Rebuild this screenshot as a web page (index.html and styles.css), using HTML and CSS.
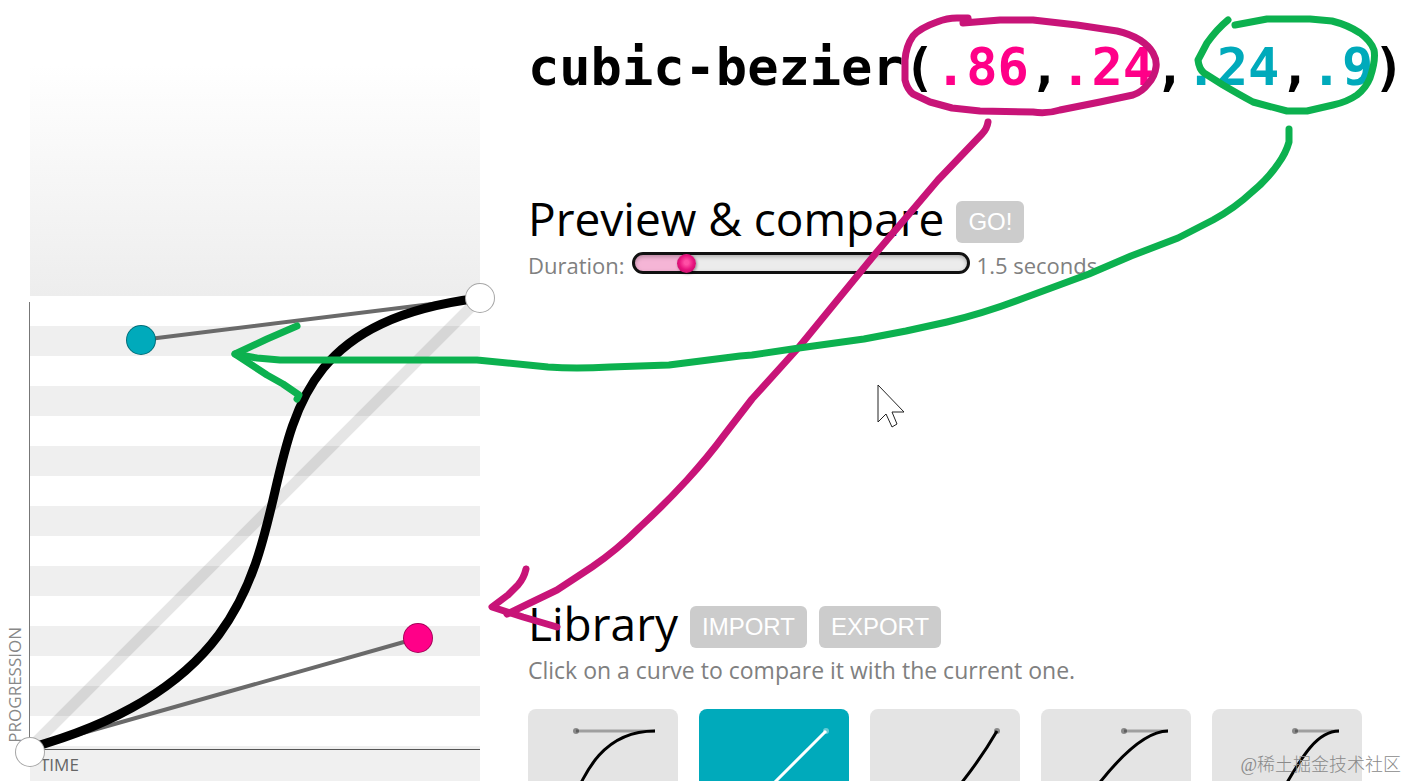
FILE: index.html
```html
<!DOCTYPE html>
<html lang="en">
<head>
    <meta charset="UTF-8">
    <meta name="viewport" content="width=device-width, initial-scale=1.0">
    <title>cubic-bezier(.86,.24,.24,.9)</title>
    <link rel="stylesheet" href="styles.css">
</head>
<body>
    <div class="page">
        <div class="graph">
            <div class="graph-top"></div>
            <div class="plane">
                <span class="axis axis-y">PROGRESSION</span>
                <svg class="curve" viewBox="0 0 450 450" width="450" height="450">
                    <path class="diagonal" d="M0 450L450 0"/>
                    <path class="arm" d="M0 450L388 340M450 0L111 42"/>
                    <path class="bezier" d="M0 450C388 342 111 42 450 0"/>
                </svg>
                <button class="handle handle-start" type="button" aria-label="Start"></button>
                <button class="handle handle-p1" type="button" aria-label="P1"></button>
                <button class="handle handle-p2" type="button" aria-label="P2"></button>
                <button class="handle handle-end" type="button" aria-label="End"></button>
            </div>
            <div class="graph-bottom"><span class="axis">TIME</span></div>
        </div>

        <main class="content">
            <h1>cubic-bezier(<span class="p1">.86</span>,<span class="p1">.24</span>,<span class="p2">.24</span>,<span class="p2">.9</span>)</h1>

            <section class="preview">
                <div class="section-head">
                    <h2>Preview &amp; compare</h2>
                    <button class="btn" type="button">GO!</button>
                </div>
                <div class="duration">
                    <label for="duration">Duration:</label>
                    <input type="range" id="duration" min="0" max="11" step="0.1" value="1.5">
                    <output for="duration">1.5 seconds</output>
                </div>
            </section>

            <section class="library">
                <div class="section-head">
                    <h2>Library</h2>
                    <button class="btn" type="button">IMPORT</button>
                    <button class="btn" type="button">EXPORT</button>
                </div>
                <p>Click on a curve to compare it with the current one.</p>
                <div class="curves">
                    <button class="card" type="button" aria-label="ease">
                        <svg viewBox="0 0 150 150"><path class="line" d="M22 127L48 117M127 22H48"/><circle cx="48" cy="22" r="3"/><path d="M22 127C48 117 48 22 127 22"/></svg>
                    </button>
                    <button class="card selected" type="button" aria-label="linear">
                        <svg viewBox="0 0 150 150"><circle cx="127" cy="22" r="3"/><path d="M22 127L127 22"/></svg>
                    </button>
                    <button class="card" type="button" aria-label="ease-in">
                        <svg viewBox="0 0 150 150"><path class="line" d="M22 127H66"/><circle cx="127" cy="22" r="3"/><path d="M22 127C66 127 127 22 127 22"/></svg>
                    </button>
                    <button class="card" type="button" aria-label="ease-out">
                        <svg viewBox="0 0 150 150"><path class="line" d="M127 22H83"/><circle cx="83" cy="22" r="3"/><path d="M22 127C22 127 83 22 127 22"/></svg>
                    </button>
                    <button class="card" type="button" aria-label="ease-in-out">
                        <svg viewBox="0 0 150 150"><path class="line" d="M22 127H66M127 22H83"/><circle cx="83" cy="22" r="3"/><path d="M22 127C66 127 83 22 127 22"/></svg>
                    </button>
                </div>
            </section>
        </main>
    </div>

    <!-- pen marks over the page -->
    <svg class="notes" viewBox="0 0 1407 781" width="1407" height="781" aria-hidden="true">
        <g class="pen-pink">
            <path d="M963 23L1000 20L1033 20L1077 25L1117 31Q1130 34 1140 40Q1149 46 1153 53Q1157 60 1156 67Q1155 76 1148 84Q1142 92 1133 95L1100 102L1060 110Q1047 114 1033 112L980 111L952 108L930 102L913 94Q907 89 905 80L905 60Q906 46 913 36Q920 28 937 22Q947 18 957 18H968V21"/>
            <path d="M988 122Q987 129 982 134L938 180L876 253L835 303L799 347L752 399L725 434Q708 457 687 480Q665 504 640 527Q617 550 592 567L557 590L530 603L507 614"/>
            <path d="M526 569Q524 578 518 585L508 595L492 607L523 617L557 627"/>
        </g>
        <g class="pen-green">
            <path d="M1235 25L1267 19H1310L1332 21Q1348 25 1360 33Q1371 41 1374 50Q1376 60 1370 78Q1366 88 1357 95Q1347 102 1333 105L1307 111H1287L1253 102Q1240 95 1223 85L1204 73Q1199 69 1198 60L1207 43Q1217 29 1228 20"/>
            <path d="M1289 129V142Q1286 153 1278 164Q1267 180 1252 192Q1235 208 1213 220L1178 238L1131 256L1089 274L1024 298Q985 313 947 322L906 331L864 339L799 348L752 355L740 356L669 365L610 367Q575 369 548 367L477 360H280L257 358L235 354"/>
            <path d="M297 326L267 339L235 354L267 375L283 384L299 395L297 399"/>
        </g>
        <path class="cursor" d="M878 385V422L886 414L892 427L897 424L892 412H904Z"/>
    </svg>
    <span class="watermark">@稀土掘金技术社区</span>
</body>
</html>
```
FILE: styles.css
```css
* {
    box-sizing: border-box;
}
body {
    margin: 0;
    height: 100vh;
    overflow: hidden;
    position: relative;
    background: #fff;
    color: #000;
    font-family: "Open Sans", "Noto Sans", sans-serif;
}
.page {
    display: grid;
    grid-template-columns: 450px minmax(0, 1fr);
    column-gap: 48px;
    height: 100%;
    padding-left: 30px;
    overflow: hidden;
}

/* Graph */
.graph {
    display: flex;
    flex-direction: column;
}
.graph-top {
    height: 296px;
    background: linear-gradient(#fff 22%, #ededed);
}
.plane {
    position: relative;
    height: 454px;
    padding-top: 2px;
    border-bottom: 1px solid #555;
    background: repeating-linear-gradient(#fff 0 30px, #efefef 30px 60px);
}
.plane::before {
    content: "";
    position: absolute;
    left: -1px;
    top: 6px;
    bottom: 0;
    width: 1px;
    background: #777;
}
.curve {
    display: block;
    overflow: visible;
    position: relative;
}
.curve path {
    fill: none;
}
.curve .diagonal {
    stroke: rgba(0, 0, 0, 0.1);
    stroke-width: 11;
}
.curve .arm {
    stroke: #6a6a6a;
    stroke-width: 4;
}
.curve .bezier {
    stroke: #000;
    stroke-width: 9;
}
.handle {
    position: absolute;
    width: 30px;
    height: 30px;
    margin: -15px;
    padding: 0;
    border: 1px solid rgba(0, 0, 0, 0.35);
    border-radius: 50%;
    background: #fff;
    background-clip: border-box;
    cursor: pointer;
}
.handle-start {
    left: 0;
    top: 456px;
}
.handle-end {
    left: 450px;
    top: 2px;
}
.handle-p1 {
    left: 388px;
    top: 342px;
    background: #ff0088;
}
.handle-p2 {
    left: 111px;
    top: 44px;
    background: #00aabb;
}
.graph-bottom {
    flex: 1;
    padding: 3px 10px;
    background: #f0f0f0;
}
.axis {
    color: #666;
    font-size: 17px;
    line-height: 24px;
}
.axis-y {
    position: absolute;
    right: 100%;
    bottom: 6px;
    margin-right: 3px;
    color: #888;
    writing-mode: vertical-rl;
    transform: rotate(180deg);
}
.graph-bottom .axis {
    display: block;
}

/* Right side */
.content {
    padding-top: 35px;
}
h1 {
    margin: 0 0 92px;
    font-family: "DejaVu Sans Mono", monospace;
    font-size: 52px;
    line-height: 64px;
    white-space: nowrap;
}
.p1 {
    color: #ff0088;
}
.p2 {
    color: #00aabb;
}
.preview {
    min-height: 405px;
}
.section-head {
    display: flex;
    align-items: flex-end;
    gap: 12px;
    margin-bottom: 4px;
}
h2 {
    margin: 0;
    font-size: 46px;
    font-weight: 400;
    line-height: 54px;
}
.btn {
    height: 42px;
    margin-bottom: 2px;
    padding: 0 12px;
    border: none;
    border-radius: 6px;
    background: #ccc;
    color: #fff;
    font-family: "Liberation Sans", Arial, sans-serif;
    font-size: 24px;
    cursor: pointer;
}
.duration,
.library p {
    margin: 0;
    color: #808080;
    font-size: 22px;
    line-height: 32px;
}
.library p {
    font-size: 23px;
}
.duration {
    display: flex;
    gap: 7px;
}
#duration {
    -webkit-appearance: none;
    appearance: none;
    width: 338px;
    height: 22px;
    margin: 3px 0;
    border: 3px solid #111;
    border-radius: 11px;
    background: linear-gradient(to right, #f5b5d6 16%, #ececec 16%);
    box-shadow: inset 0 2px 4px rgba(0, 0, 0, 0.25);
}
#duration::-webkit-slider-thumb {
    -webkit-appearance: none;
    width: 19px;
    height: 19px;
    border-radius: 50%;
    background: radial-gradient(circle at 50% 45%, #ff4fa5 15%, #e8147f 50%, #a80a58);
    box-shadow: 1px 1px 3px rgba(0, 0, 0, 0.4);
}
.curves {
    display: flex;
    gap: 21px;
    margin-top: 23px;
}
.card {
    flex: 0 0 150px;
    height: 150px;
    padding: 0;
    border: none;
    border-radius: 8px;
    background: #e4e4e4;
    color: #000;
    cursor: pointer;
}
.card.selected {
    background: #00aabb;
    color: #fff;
}
.card svg {
    display: block;
}
.card path {
    fill: none;
    stroke: currentColor;
    stroke-width: 3;
}
.card .line {
    opacity: 0.3;
}
.card circle {
    fill: currentColor;
    opacity: 0.4;
}

/* Annotations */
.notes {
    position: absolute;
    left: 0;
    top: 0;
    pointer-events: none;
}
.notes g {
    fill: none;
    stroke-width: 7;
    stroke-linecap: round;
    stroke-linejoin: round;
}
.pen-pink {
    stroke: #c81478;
}
.pen-green {
    stroke: #0cb14f;
}
.cursor {
    fill: #fff;
    stroke: #222;
    stroke-width: 1;
}
.watermark {
    position: absolute;
    right: 6px;
    bottom: 4px;
    color: #8a8a8a;
    font-family: "Liberation Serif", "Noto Sans CJK SC", serif;
    font-size: 18px;
    font-weight: 300;
    line-height: 24px;
}
```
